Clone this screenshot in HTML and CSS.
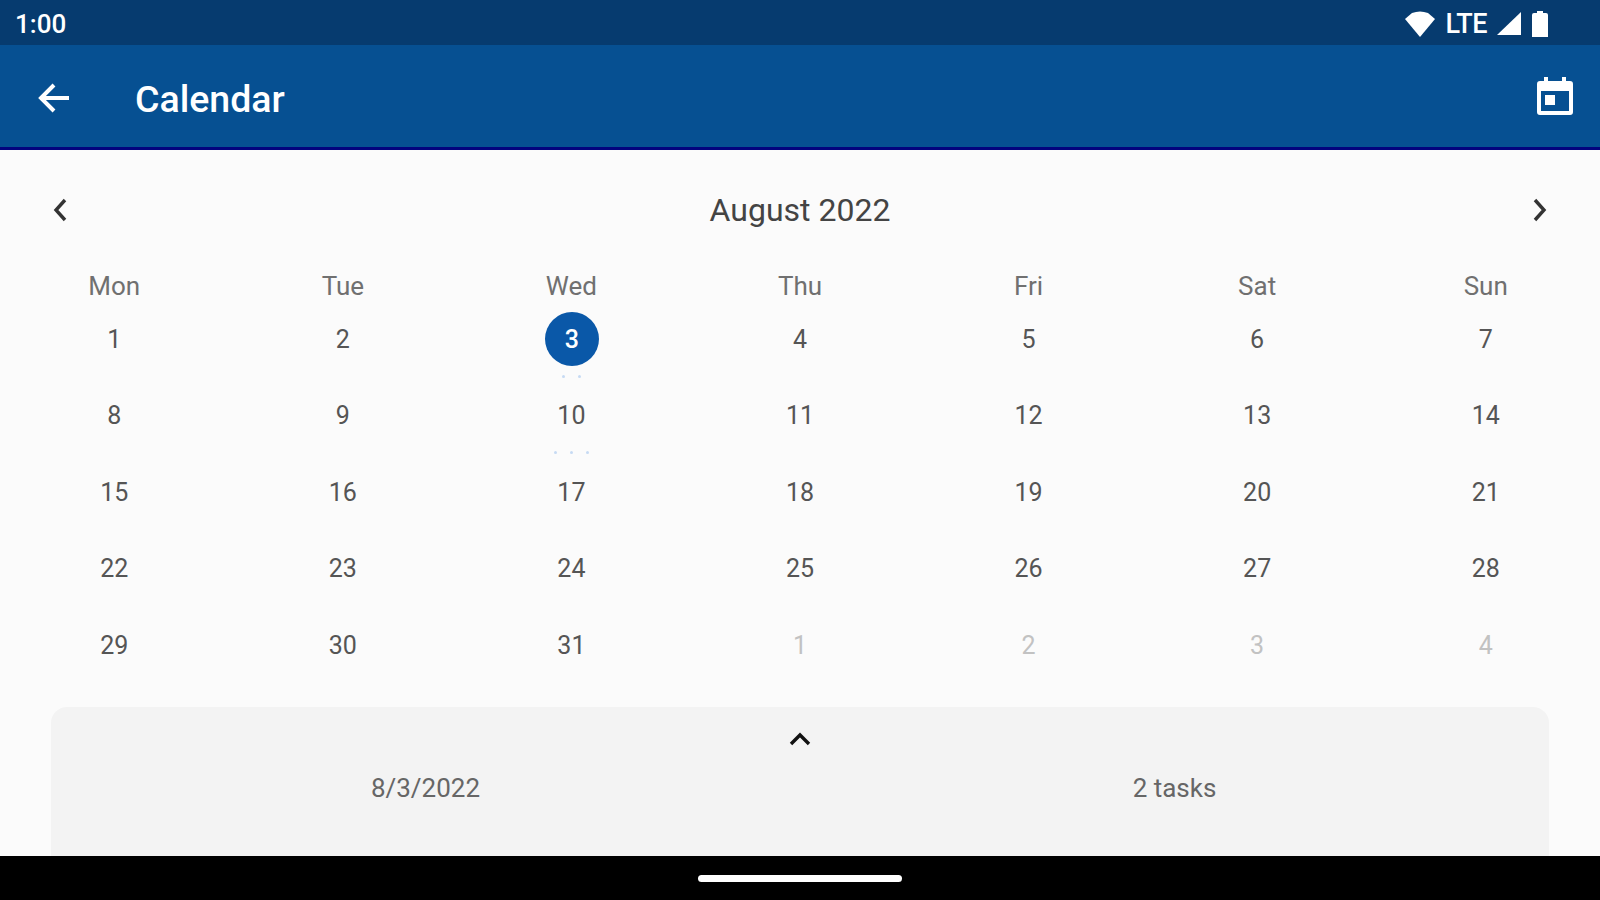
FILE: index.html
```html
<!DOCTYPE html>
<html lang="en">
<head>
    <meta charset="UTF-8">
    <title>Calendar</title>
    <link rel="stylesheet" href="styles.css">
</head>
<body>
    <div class="statusBar">
        <span class="statusTime">1:00</span>
        <div class="statusIcons">
            <svg class="wifiIcon" width="30" height="26" viewBox="0 0 30 26"><path d="M0 8 L7 2 Q15 -1 23 2 L30 8 L15 26 Z" fill="#fff"/></svg>
            <span class="statusLte">LTE</span>
            <svg class="signalIcon" width="25" height="24" viewBox="0 0 25 24"><path d="M0 23 L24 0 V23 Z" fill="#fff"/></svg>
            <svg class="batteryIcon" width="16" height="26" viewBox="0 0 16 26"><path d="M5 0 H11 V2 H14 Q16 2 16 4 V26 H0 V4 Q0 2 2 2 H5 Z" fill="#fff"/></svg>
        </div>
    </div>
    <header class="appBar">
        <svg class="backIcon" width="36" height="36" viewBox="0 0 36 36"><path d="M33 18 H6 M18 5 L5 18 L18 31" fill="none" stroke="#fff" stroke-width="4"/></svg>
        <h1 class="appTitle">Calendar</h1>
        <svg class="todayIcon" width="36" height="42" viewBox="0 0 36 42"><path d="M3 6 H33 Q36 6 36 9 V37 Q36 40 33 40 H3 Q0 40 0 37 V9 Q0 6 3 6 Z M4 16 V36 H32 V16 Z" fill="#fff" fill-rule="evenodd"/><path d="M7 2 H11 V8 H7 Z M25 2 H29 V8 H25 Z" fill="#fff"/><rect x="8" y="20" width="10" height="10" fill="#fff"/></svg>
    </header>
    <main class="calendar">
        <div class="monthRow">
            <svg width="20" height="26" viewBox="0 0 20 26"><path d="M15 3 L6 13 L15 23" fill="none" stroke="#333" stroke-width="3.4"/></svg>
            <span class="monthName">August 2022</span>
            <svg width="20" height="26" viewBox="0 0 20 26"><path d="M5 3 L14 13 L5 23" fill="none" stroke="#333" stroke-width="3.4"/></svg>
        </div>
        <div class="weekdays">
            <span>Mon</span><span>Tue</span><span>Wed</span><span>Thu</span><span>Fri</span><span>Sat</span><span>Sun</span>
        </div>
        <div class="days">
            <div class="day">1</div><div class="day">2</div>
            <div class="day"><span class="selected">3</span><span class="dots"><i></i><i></i></span></div>
            <div class="day">4</div><div class="day">5</div><div class="day">6</div><div class="day">7</div>
            <div class="day">8</div><div class="day">9</div>
            <div class="day">10<span class="dots"><i></i><i></i><i></i></span></div>
            <div class="day">11</div><div class="day">12</div><div class="day">13</div><div class="day">14</div>
            <div class="day">15</div><div class="day">16</div><div class="day">17</div><div class="day">18</div><div class="day">19</div><div class="day">20</div><div class="day">21</div>
            <div class="day">22</div><div class="day">23</div><div class="day">24</div><div class="day">25</div><div class="day">26</div><div class="day">27</div><div class="day">28</div>
            <div class="day">29</div><div class="day">30</div><div class="day">31</div>
            <div class="day muted">1</div><div class="day muted">2</div><div class="day muted">3</div><div class="day muted">4</div>
        </div>
        <section class="sheet">
            <svg class="sheetHandle" width="24" height="16" viewBox="0 0 24 16"><path d="M3 13 L12 4 L21 13" fill="none" stroke="#111" stroke-width="3.4"/></svg>
            <div class="sheetRow">
                <span>8/3/2022</span>
                <span>2 tasks</span>
            </div>
        </section>
    </main>
    <div class="navBar"><div class="homePill"></div></div>
</body>
</html>
```

FILE: styles.css
```css
* {
    box-sizing: border-box;
}
body {
    margin: 0;
    height: 900px;
    overflow: hidden;
    display: flex;
    flex-direction: column;
    background-color: #fbfbfb;
    font-family: Roboto, sans-serif;
    color: #555;
}
.statusBar {
    height: 45px;
    background-color: #063b6f;
    color: #fff;
    display: flex;
    justify-content: space-between;
    align-items: center;
    padding: 3px 52px 0 15px;
}
.statusTime {
    font-size: 26px;
    font-weight: 500;
}
.statusIcons {
    display: flex;
    align-items: center;
    gap: 10px;
}
.statusLte {
    font-size: 27px;
    font-weight: 500;
    letter-spacing: -0.5px;
}
.appBar {
    height: 105px;
    background-color: #065092;
    border-bottom: 3px solid #03037e;
    display: flex;
    align-items: center;
    padding: 4px 27px 0 36px;
}
.appTitle {
    flex: 1;
    margin: 2px 0 0 63px;
    font-size: 37.5px;
    font-weight: 500;
    color: #fff;
}
.todayIcon {
    margin-bottom: 4px;
}
.calendar {
    flex: 1;
    display: flex;
    flex-direction: column;
    min-height: 0;
}
.monthRow {
    height: 120px;
    padding: 0 50px;
    display: flex;
    justify-content: space-between;
    align-items: center;
}
.monthName {
    font-size: 32px;
    color: #444;
}
.weekdays,
.days {
    display: grid;
    grid-template-columns: repeat(7, 1fr);
    text-align: center;
}
.weekdays {
    height: 31px;
    align-items: center;
    font-size: 26px;
    color: #707070;
}
.day {
    height: 76.5px;
    display: flex;
    flex-direction: column;
    align-items: center;
    justify-content: center;
    font-size: 25px;
    position: relative;
}
.day.muted {
    color: #c2c2c2;
}
.selected {
    width: 54px;
    height: 54px;
    margin-left: 1px;
    border-radius: 50%;
    background-color: #0a58a8;
    color: #fff;
    font-weight: 500;
    display: flex;
    align-items: center;
    justify-content: center;
}
.dots {
    position: absolute;
    bottom: 0;
    display: flex;
    gap: 13px;
}
.dots i {
    width: 3px;
    height: 3px;
    border-radius: 50%;
    background-color: #c6daf3;
}
.sheet {
    flex: 1;
    margin: 23px 51px 0;
    background-color: #f3f3f3;
    border-radius: 16px 16px 0 0;
    display: flex;
    flex-direction: column;
    align-items: center;
    padding-top: 24px;
}
.sheetRow {
    width: 100%;
    display: grid;
    grid-template-columns: 1fr 1fr;
    text-align: center;
    margin-top: 26px;
    font-size: 26px;
    color: #666;
}
.navBar {
    height: 44px;
    background-color: #000;
    display: flex;
    align-items: center;
    justify-content: center;
}
.homePill {
    width: 204px;
    height: 7px;
    border-radius: 4px;
    background-color: #fff;
}
```
